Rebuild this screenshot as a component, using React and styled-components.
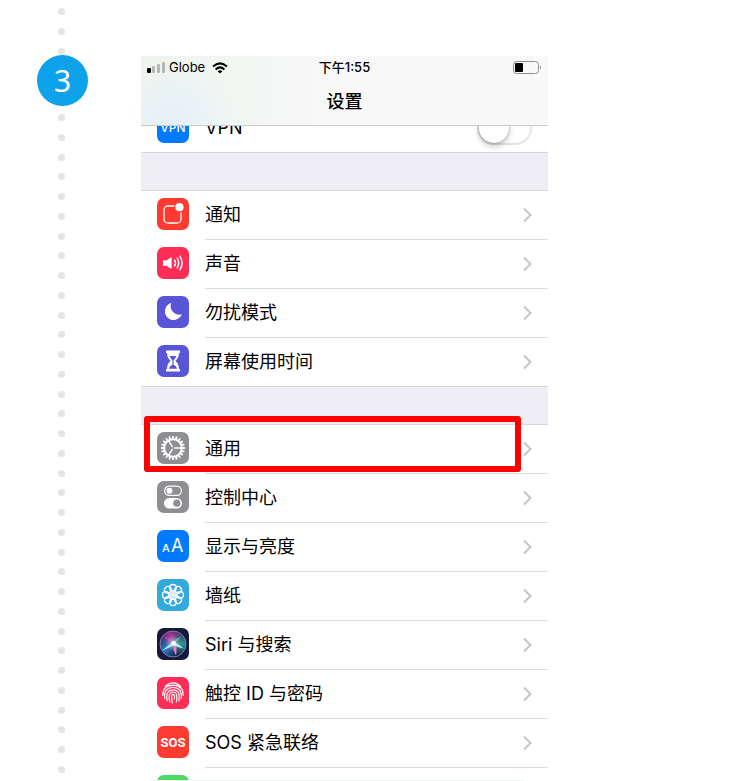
import styled, {createGlobalStyle} from 'styled-components';

const GlobalStyle = createGlobalStyle`
	* {
		box-sizing: border-box;
	}
	body {
		margin: 0;
		background: #fff;
		color: #000;
		font-family: Inter, "Noto Sans CJK SC", sans-serif;
	}
`
const Page = styled.div`
	display: flex;
	align-items: stretch;
	gap: 53px;
	padding-left: 37px;
`
const Rail = styled.div`
	display: flex;
	flex-direction: column;
	flex-shrink: 0;
	width: 51px;
`
const Dots = styled.div`
	display: flex;
	flex-direction: column;
	align-items: center;
	justify-content: space-between;
	flex: ${props => props.$grow ? 1 : 'none'};
	gap: ${props => props.$grow ? '0' : '13px'};
	padding: ${props => props.$grow ? '8px 3px 8px 0' : '8px 3px 0 0'};
`
const Dot = styled.span`
	width: 7px;
	height: 7px;
	border-radius: 50%;
	background: #e4e4e4;
`
const StepNumber = styled.div`
	display: flex;
	align-items: center;
	justify-content: center;
	height: 51px;
	border-radius: 50%;
	background: #0ea2ea;
	color: #fff;
	font-family: "Noto Sans", "Open Sans", sans-serif;
	font-size: 30px;
	line-height: 51px;
`
const Phone = styled.main`
	flex: 1;
	max-width: 407px;
	margin-top: 56px;
`
const Header = styled.header`
	border-bottom: 1px solid #cbcbce;
	background:
		radial-gradient(circle at 34px 70px, #e4f0fa 0, rgba(228,240,250,0) 62px),
		linear-gradient(90deg, #edf5ee 0, #f8f8f8 50%);
`
const StatusBar = styled.div`
	display: grid;
	grid-template-columns: 1fr auto 1fr;
	align-items: center;
	height: 23px;
	padding: 0 6px;
	font-size: 13px;
	line-height: 23px;
`
const Carrier = styled.div`
	display: flex;
	align-items: center;
	gap: 4px;
`
const Wifi = styled.svg`
	margin-left: 3px;
`
const Time = styled.div`
	font-weight: 500;
`
const Battery = styled.svg`
	justify-self: end;
`
const Title = styled.h1`
	margin: 0;
	height: 46px;
	font-size: 18px;
	font-weight: 500;
	line-height: 46px;
	text-align: center;
`
const Group = styled.ul`
	margin: 0;
	padding: 0;
	list-style: none;
`
const Gap = styled.div`
	height: 39px;
	border-top: 1px solid #d6d6da;
	border-bottom: 1px solid #d6d6da;
	background: #efeef4;
`
const Item = styled.li`
	position: relative;
`
const ClippedTop = styled.div`
	display: flex;
	align-items: flex-end;
	height: 26px;
	overflow: hidden;
`
const ClippedBottom = styled.div`
	height: 12px;
	overflow: hidden;
`
const Row = styled.a`
	display: flex;
	align-items: center;
	gap: 16px;
	width: 100%;
	height: 48px;
	padding: 0 16px;
	color: inherit;
	text-decoration: none;
`
const Icon = styled.svg`
	flex-shrink: 0;
	width: 32px;
	height: 32px;
	margin-bottom: 2px;
	border-radius: 7px;
	background: ${props => props.$color};
`
const Label = styled.span`
	flex: 1;
	font-size: 18px;
	line-height: 24px;
	white-space: nowrap;
`
const Separator = styled.div`
	height: 1px;
	margin-left: 64px;
	background: #dcdcde;
`
const Switch = styled.input`
	appearance: none;
	width: 55px;
	height: 34px;
	margin: 0;
	border: 2px solid #e5e5e5;
	border-radius: 17px;
	background: #fff;
	&::before {
		content: '';
		display: block;
		width: 30px;
		height: 30px;
		border-radius: 50%;
		background: #fff;
		box-shadow: 0 3px 6px rgba(0,0,0,0.25), 0 0 2px rgba(0,0,0,0.3);
	}
`
const Highlight = styled.div`
	position: absolute;
	top: -9px;
	right: 27px;
	bottom: 2px;
	left: 3px;
	border: 6px solid #fe0000;
	border-radius: 3px;
	pointer-events: none;
`
const PageEnd = styled.div`
	height: 1px;
	margin: 0 24px 0 9px;
	background: #eef6f4;
`

const range = (n) => Array.from({length: n}, (_, i) => i);

const Chevron = () => (
	<svg width="9" height="16" viewBox="0 0 9 16" fill="none" stroke="#c4c4c9" strokeWidth="2">
		<path d="M1 1.5 L7.5 8 L1 14.5"/>
	</svg>
)

const VpnIcon = () => (
	<Icon $color="#007aff" viewBox="0 0 32 32">
		<text x="16" y="21" textAnchor="middle" fontSize="12" fontWeight="500" fill="#fff">VPN</text>
	</Icon>
)

const NotificationIcon = () => (
	<Icon $color="#ff3b30" viewBox="0 0 32 32">
		<rect x="7" y="8" width="17" height="17" rx="4" fill="none" stroke="#fff" strokeWidth="1.3"/>
		<circle cx="22.5" cy="9.2" r="5.4" fill="#ff3b30"/>
		<circle cx="22.5" cy="9.2" r="4.1" fill="#fff"/>
	</Icon>
)

const SoundIcon = () => (
	<Icon $color="#ff2d55" viewBox="0 0 32 32">
		<path d="M6 13.4 H9.3 L14.6 10 V22 L9.3 18.8 H6 Z" fill="#fff"/>
		<g fill="none" stroke="#fff" strokeWidth="1.5" strokeLinecap="round">
			<path d="M17.6 13.2 Q19.4 16 17.6 18.8"/>
			<path d="M20.2 11.2 Q23.2 16 20.2 20.8"/>
			<path d="M22.8 9.2 Q27.4 16 22.8 22.8"/>
		</g>
	</Icon>
)

const MoonIcon = () => (
	<Icon $color="#5856d6" viewBox="0 0 32 32">
		<path d="M14.2 7 A8.7 8.7 0 1 0 24.8 18.2 A8.6 8.6 0 0 1 14.2 7 Z" fill="#fff"/>
	</Icon>
)

const HourglassIcon = () => (
	<Icon $color="#5856d6" viewBox="0 0 32 32">
		<path d="M9 5.6 H23 V8 H21.9 C21.9 12 20.8 13.4 18.3 15.8 C20.8 18.2 21.9 19.8 21.9 24 H23 V26.4 H9 V24 H10.1 C10.1 19.8 11.2 18.2 13.7 15.8 C11.2 13.4 10.1 12 10.1 8 H9 Z" fill="#fff"/>
		<path d="M12.6 11 H19.4 C18.8 12.8 17.6 13.8 16.6 15.2 V20 C18.4 20.6 19.6 21.8 20 23.8 H12 C12.4 21.8 13.6 20.6 15.4 20 V15.2 C14.4 13.8 13.2 12.8 12.6 11 Z" fill="#5856d6"/>
	</Icon>
)

const GearIcon = () => (
	<Icon $color="#8e8e93" viewBox="0 0 32 32">
		<g fill="none" stroke="#fff">
			<circle cx="16" cy="16" r="8.8" strokeWidth="2"/>
			{range(20).map(i => (
				<path key={i} d="M16 4 V7.4" strokeWidth="1.8" transform={`rotate(${i * 18} 16 16)`}/>
			))}
			{[90, 210, 330].map(a => (
				<path key={a} d="M16 15 V7.4" strokeWidth="1.5" transform={`rotate(${a} 16 16)`}/>
			))}
		</g>
	</Icon>
)

const ControlIcon = () => (
	<Icon $color="#8e8e93" viewBox="0 0 32 32">
		<rect x="7.6" y="5.2" width="16.8" height="9.2" rx="4.6" fill="none" stroke="#fff" strokeWidth="1.2"/>
		<circle cx="12.4" cy="9.8" r="3" fill="#fff"/>
		<rect x="7" y="17" width="18" height="10.4" rx="5.2" fill="#fff"/>
		<circle cx="19.8" cy="22.2" r="3.6" fill="#8e8e93"/>
	</Icon>
)

const DisplayIcon = () => (
	<Icon $color="#007aff" viewBox="0 0 32 32">
		<text x="5" y="22" fontSize="11" fontWeight="500" fill="#fff">A</text>
		<text x="14" y="22" fontSize="18" fill="#fff">A</text>
	</Icon>
)

const WallpaperIcon = () => (
	<Icon $color="#34aadc" viewBox="0 0 32 32">
		<g fill="none" stroke="#fff" strokeWidth="1.3">
			{range(8).map(i => (
				<circle key={i} cx="16" cy="8.8" r="3.3" transform={`rotate(${i * 45} 16 16)`}/>
			))}
			{range(8).map(i => (
				<circle key={i} cx="16" cy="12.6" r="1.5" strokeWidth="1" transform={`rotate(${i * 45 + 22} 16 16)`}/>
			))}
			<circle cx="16" cy="16" r="1.6" fill="#fff" stroke="none"/>
		</g>
	</Icon>
)

const SiriIcon = () => (
	<Icon $color="#17183c" viewBox="0 0 32 32">
		<defs>
			<radialGradient id="siri-pink" cx="0.42" cy="0.2" r="0.55">
				<stop offset="0" stopColor="#b53a9c"/>
				<stop offset="1" stopColor="#b53a9c" stopOpacity="0"/>
			</radialGradient>
			<radialGradient id="siri-teal" cx="0.85" cy="0.5" r="0.5">
				<stop offset="0" stopColor="#2a9c98"/>
				<stop offset="1" stopColor="#2a9c98" stopOpacity="0"/>
			</radialGradient>
			<radialGradient id="siri-blue" cx="0.2" cy="0.7" r="0.5">
				<stop offset="0" stopColor="#2f7fd6"/>
				<stop offset="1" stopColor="#2f7fd6" stopOpacity="0"/>
			</radialGradient>
			<radialGradient id="siri-glow" cx="0.5" cy="0.48" r="0.3">
				<stop offset="0" stopColor="#fff"/>
				<stop offset="1" stopColor="#fff" stopOpacity="0"/>
			</radialGradient>
		</defs>
		<circle cx="16" cy="16" r="13" fill="url(#siri-pink)"/>
		<circle cx="16" cy="16" r="13" fill="url(#siri-teal)"/>
		<circle cx="16" cy="16" r="13" fill="url(#siri-blue)"/>
		<circle cx="16" cy="16" r="13" fill="none" stroke="#7d8bb0" strokeWidth="0.9"/>
		<path d="M16.5 15.5 Q10 12 6 8.5 Q13 8.5 16.5 15.5 Z" fill="#c04fb4" fillOpacity="0.6"/>
		<path d="M16.5 15 Q19 9 24.5 9.5 Q21 12 16.5 15 Z" fill="#4fc5c0" fillOpacity="0.7"/>
		<circle cx="16" cy="16" r="13" fill="url(#siri-glow)" fillOpacity="0.6"/>
		<path d="M17.4 13.6 Q11 17 5 22.6 Q12 20.4 18 16.6 Z" fill="#a6ecff"/>
		<path d="M15.8 15 Q16 22 18.8 27.6 Q20.6 22 18 15 Z" fill="#ee7cc6"/>
		<path d="M15.8 14 Q21 14.8 26.6 20.6 Q20.6 19.4 15.8 16.8 Z" fill="#a9f3e4"/>
		<circle cx="16.6" cy="15.4" r="2.4" fill="#fff"/>
	</Icon>
)

const FingerprintIcon = () => (
	<Icon $color="#ff2d55" viewBox="0 0 32 32">
		<g fill="none" stroke="#fff" strokeWidth="1.2" strokeLinecap="round">
			<path d="M8.3 9.6 Q11.4 5.8 16 5.8 Q20.6 5.8 23.7 9.6"/>
			<path d="M5.8 18.4 Q5.6 8.4 16 8.2 Q26.4 8.4 26.2 18.4"/>
			<path d="M7.8 21.6 Q6.4 10.6 16 10.5 Q25.6 10.6 24.2 21.6"/>
			<path d="M10.2 23.6 Q8.2 12.8 16 12.8 Q23.8 12.8 21.9 23.8"/>
			<path d="M12.8 25 Q10.4 15 16 15 Q21.4 15 19.4 25"/>
			<path d="M15.4 25.8 Q13.4 17.4 16 17.4 Q18.2 17.4 17.2 22"/>
		</g>
	</Icon>
)

const SosIcon = () => (
	<Icon $color="#ff3b30" viewBox="0 0 32 32">
		<text x="16" y="21" textAnchor="middle" fontFamily="Roboto, sans-serif" fontSize="13" fontWeight="700" fill="#fff">SOS</text>
	</Icon>
)

const alerts = [
	{id: 'notifications', label: '通知', icon: <NotificationIcon/>},
	{id: 'sounds', label: '声音', icon: <SoundIcon/>},
	{id: 'dnd', label: '勿扰模式', icon: <MoonIcon/>},
	{id: 'screen-time', label: '屏幕使用时间', icon: <HourglassIcon/>},
];

const system = [
	{id: 'general', label: '通用', icon: <GearIcon/>, highlight: true},
	{id: 'control-center', label: '控制中心', icon: <ControlIcon/>},
	{id: 'display', label: '显示与亮度', icon: <DisplayIcon/>},
	{id: 'wallpaper', label: '墙纸', icon: <WallpaperIcon/>},
	{id: 'siri', label: 'Siri 与搜索', icon: <SiriIcon/>},
	{id: 'touch-id', label: '触控 ID 与密码', icon: <FingerprintIcon/>},
	{id: 'sos', label: 'SOS 紧急联络', icon: <SosIcon/>},
];

const Settings = ({items, open}) => (
	<Group>
		{items.map((item, i) => (
			<Item key={item.id}>
				<Row href={`#${item.id}`}>
					{item.icon}
					<Label>{item.label}</Label>
					<Chevron/>
				</Row>
				{(open || i < items.length - 1) && <Separator/>}
				{item.highlight && <Highlight/>}
			</Item>
		))}
	</Group>
)

const App = () => {
	return (
		<>
			<GlobalStyle/>
			<Page>
				<Rail>
					<Dots>
						{range(3).map(i => <Dot key={i}/>)}
					</Dots>
					<StepNumber>3</StepNumber>
					<Dots $grow>
						{range(34).map(i => <Dot key={i}/>)}
					</Dots>
				</Rail>
				<Phone>
					<Header>
						<StatusBar>
							<Carrier>
								<svg width="18" height="11" viewBox="0 0 18 11">
									<rect x="0" y="6" width="4" height="5" rx="1" fill="#000"/>
									<rect x="5" y="4" width="3" height="7" rx="1" fill="#b4b8b5"/>
									<rect x="10" y="2" width="3" height="9" rx="1" fill="#b4b8b5"/>
									<rect x="15" y="0" width="3" height="11" rx="1" fill="#b4b8b5"/>
								</svg>
								Globe
								<Wifi width="16" height="12" viewBox="0 0 16 12" fill="none" stroke="#000" strokeWidth="2">
									<path d="M1 4.6 Q8 -1.8 15 4.6"/>
									<path d="M3.6 7.4 Q8 3.4 12.4 7.4"/>
									<path d="M8 11.6 L5.6 9.2 Q8 7.2 10.4 9.2 Z" fill="#000" stroke="none"/>
								</Wifi>
							</Carrier>
							<Time>下午1:55</Time>
							<Battery width="29" height="13" viewBox="0 0 29 13">
								<rect x="0.5" y="0.5" width="25" height="12" rx="3" fill="none" stroke="#8f8f8f"/>
								<rect x="2" y="2" width="8" height="9" rx="1" fill="#000"/>
								<path d="M27 4.5 Q29 6.5 27 8.5 Z" fill="#8f8f8f"/>
							</Battery>
						</StatusBar>
						<Title>设置</Title>
					</Header>
					<ClippedTop>
						<Row as="label">
							<VpnIcon/>
							<Label>VPN</Label>
							<Switch type="checkbox"/>
						</Row>
					</ClippedTop>
					<Gap/>
					<Settings items={alerts}/>
					<Gap/>
					<Settings items={system} open/>
					<ClippedBottom>
						<Row as="div">
							<Icon $color="#4cd964" viewBox="0 0 32 32"/>
						</Row>
					</ClippedBottom>
					<PageEnd/>
				</Phone>
			</Page>
		</>
	)
}

export default App
